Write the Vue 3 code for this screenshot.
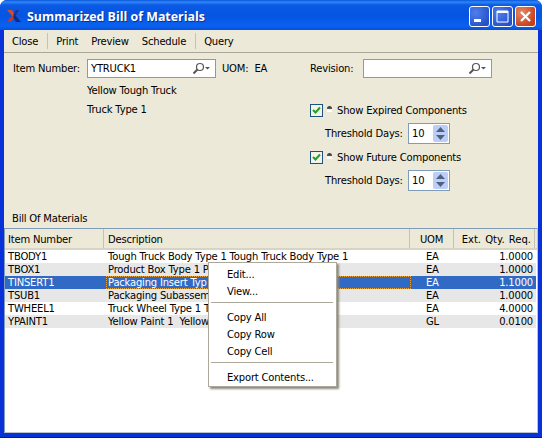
<script setup>
const rows = [
  { item: 'TBODY1', desc: 'Tough Truck Body Type 1 Tough Truck Body Type 1', uom: 'EA', qty: '1.0000' },
  { item: 'TBOX1', desc: 'Product Box Type 1 P', uom: 'EA', qty: '1.0000' },
  { item: 'TINSERT1', desc: 'Packaging Insert Typ', uom: 'EA', qty: '1.1000', selected: true },
  { item: 'TSUB1', desc: 'Packaging Subassembl', uom: 'EA', qty: '1.0000' },
  { item: 'TWHEEL1', desc: 'Truck Wheel Type 1 T', uom: 'EA', qty: '4.0000' },
  { item: 'YPAINT1', desc: 'Yellow Paint 1  Yellow', uom: 'GL', qty: '0.0100' }
]
</script>

<template>
  <div class="window">
    <div class="titlebar">
      <svg class="logo" width="14" height="14" viewBox="0 0 14 14">
        <path d="M0 1h5l3 5-2 2z" fill="#e0491c" />
        <path d="M0 13l5-6 2 2-3 4z" fill="#c8381e" />
        <path d="M12 1H9L6 6l2 2z" fill="#1d3490" />
        <path d="M14 13H9L6 8l2-2z" fill="#16297c" />
      </svg>
      <span class="title">Summarized Bill of Materials</span>
      <div class="winbtns">
        <div class="winbtn blue">
          <svg width="19" height="19" viewBox="0 0 19 19"><rect x="4" y="12" width="7" height="3" fill="#fff" /></svg>
        </div>
        <div class="winbtn blue">
          <svg width="19" height="19" viewBox="0 0 19 19"><path d="M4 4h11v11H4z" fill="none" stroke="#fff" /><rect x="4" y="4" width="11" height="2" fill="#fff" /></svg>
        </div>
        <div class="winbtn red">
          <svg width="19" height="19" viewBox="0 0 19 19"><path d="M5 5l9 9M14 5l-9 9" stroke="#fff" stroke-width="2.2" /></svg>
        </div>
      </div>
    </div>

    <div class="body">
      <div class="toolbar">
        <span class="tool">Close</span>
        <i class="sep"></i>
        <span class="tool">Print</span>
        <span class="tool">Preview</span>
        <span class="tool">Schedule</span>
        <i class="sep"></i>
        <span class="tool">Query</span>
      </div>

      <div class="form">
        <div class="col-left">
          <div class="item-row">
            <label class="item-label">Item Number:</label>
            <div class="cluster">
              <span>YTRUCK1</span>
              <svg class="lens" width="18" height="13" viewBox="0 0 18 13">
                <circle cx="8" cy="5" r="3.5" fill="#fff" stroke="#555" stroke-width="1.2" />
                <path d="M5.5 7.5L1.5 11.5" stroke="#555" stroke-width="2" />
                <path d="M13 5h5l-2.5 2.5z" fill="#555" />
              </svg>
            </div>
            <span class="uom">UOM:</span>
            <span>EA</span>
          </div>
          <div class="desc1">Yellow Tough Truck</div>
          <div class="desc2">Truck Type 1</div>
        </div>

        <div class="col-right">
          <div class="rev-row">
            <label class="rev-label">Revision:</label>
            <div class="cluster">
              <span></span>
              <svg class="lens" width="18" height="13" viewBox="0 0 18 13">
                <circle cx="8" cy="5" r="3.5" fill="#fff" stroke="#555" stroke-width="1.2" />
                <path d="M5.5 7.5L1.5 11.5" stroke="#555" stroke-width="2" />
                <path d="M13 5h5l-2.5 2.5z" fill="#555" />
              </svg>
            </div>
          </div>
          <template v-for="label in ['Show Expired Components', 'Show Future Components']" :key="label">
            <div class="check-row">
              <span class="checkbox">
                <svg width="11" height="11" viewBox="0 0 11 11"><path d="M2 5l2.5 2.5L9 2.5" fill="none" stroke="#21a121" stroke-width="2" /></svg>
              </span>
              <span class="dot"></span>
              <span>{{ label }}</span>
            </div>
            <div class="threshold-row">
              <label class="threshold-label">Threshold Days:</label>
              <div class="spin">
                <span class="spin-value">10</span>
                <div class="spin-btns">
                  <span class="spin-btn"><svg width="9" height="5" viewBox="0 0 9 5"><path d="M4.5 0L9 5H0z" fill="#4d6185" /></svg></span>
                  <span class="spin-btn"><svg width="9" height="5" viewBox="0 0 9 5"><path d="M0 0h9L4.5 5z" fill="#4d6185" /></svg></span>
                </div>
              </div>
            </div>
          </template>
        </div>
      </div>

      <div class="list-label">Bill Of Materials</div>

      <div class="table">
        <div class="thead">
          <div class="th c-item">Item Number</div>
          <div class="th c-desc">Description</div>
          <div class="th c-uom">UOM</div>
          <div class="th c-qty">Ext. Qty. Req.</div>
        </div>
        <div class="tbody">
          <div v-for="(row, i) in rows" :key="row.item" class="tr" :class="{ alt: i % 2 === 1, selected: row.selected }">
            <div class="td d-item">{{ row.item }}</div>
            <div class="td d-desc" :class="{ focus: row.selected }">{{ row.desc }}</div>
            <div class="td d-uom">{{ row.uom }}</div>
            <div class="td d-qty">{{ row.qty }}</div>
          </div>
        </div>

        <div class="menu">
          <div class="menu-item">Edit...</div>
          <div class="menu-item">View...</div>
          <div class="menu-sep"></div>
          <div class="menu-item">Copy All</div>
          <div class="menu-item">Copy Row</div>
          <div class="menu-item">Copy Cell</div>
          <div class="menu-sep"></div>
          <div class="menu-item">Export Contents...</div>
        </div>
      </div>
    </div>
  </div>
</template>

<style scoped>
.window {
  width: 542px;
  height: 438px;
  box-sizing: border-box;
  display: flex;
  flex-direction: column;
  background: #0831d9;
  border-bottom: 1px solid #001a8c;
  font-family: "DejaVu Sans", sans-serif;
  font-size: 10px;
  letter-spacing: -0.2px;
  color: #000;
  overflow: hidden;
  border-radius: 7px 7px 0 0;
}

.titlebar {
  height: 30px;
  flex: none;
  display: flex;
  align-items: center;
  box-sizing: border-box;
  padding: 2px 5px 0 7px;
  background: linear-gradient(#0a56dc 0, #2f86f5 2px, #0a5ae6 5px, #0654e2 16px, #0a62f0 26px, #0850d8 30px);
}

.logo {
  margin-right: 6px;
}

.title {
  color: #fff;
  font-family: "Open Sans", sans-serif;
  font-weight: 700;
  font-size: 12.4px;
  letter-spacing: 0;
  text-shadow: 1px 1px 0 #0a2f90;
  flex: 1;
}

.winbtns {
  display: flex;
  gap: 2px;
  margin-right: 1px;
}

.winbtn {
  width: 21px;
  height: 21px;
  border: 1px solid #fff;
  border-radius: 3px;
  box-sizing: border-box;
  display: flex;
  align-items: center;
  justify-content: center;
}

.winbtn.blue {
  background: radial-gradient(circle at 30% 30%, #4f7fee, #2450c8 80%);
}

.winbtn.red {
  background: radial-gradient(circle at 30% 30%, #e88a68, #c8401c 75%);
}

.body {
  flex: 1;
  margin: 0 4px 4px;
  background: #ece9d8;
  display: flex;
  flex-direction: column;
  min-height: 0;
}

.toolbar {
  height: 22px;
  flex: none;
  display: flex;
  align-items: center;
  padding-left: 8px;
  border-bottom: 1px solid #aca899;
  box-sizing: content-box;
}

.tool {
  margin-right: 13px;
}

.sep {
  width: 1px;
  height: 16px;
  background: #c5c2b2;
  margin-right: 8px;
  margin-left: -4px;
}

.form {
  height: 159px;
  flex: none;
  display: flex;
}

.col-left {
  width: 306px;
  flex: none;
}

.item-row {
  display: flex;
  align-items: center;
  margin-top: 6px;
}

.item-label {
  width: 76px;
  text-align: right;
  margin-right: 7px;
}

.cluster {
  height: 19px;
  background: #fff;
  border: 1px solid #7f9db9;
  display: flex;
  align-items: center;
  justify-content: space-between;
  padding: 0 5px 0 3px;
  box-sizing: border-box;
}

.item-row .cluster {
  width: 129px;
}

.uom {
  margin: 0 6px;
}

.desc1 {
  margin: 6px 0 0 83px;
  line-height: 14px;
}

.desc2 {
  margin: 5px 0 0 83px;
  line-height: 14px;
}

.col-right {
  flex: 1;
}

.rev-row {
  display: flex;
  align-items: center;
  margin-top: 6px;
  margin-bottom: 25px;
}

.rev-label {
  width: 53px;
}

.rev-row .cluster {
  width: 129px;
}

.check-row {
  display: flex;
  align-items: center;
  height: 14px;
}

.checkbox {
  width: 13px;
  height: 13px;
  box-sizing: border-box;
  border: 1px solid #1c5180;
  background: #f3f3ec;
  display: flex;
  align-items: center;
  justify-content: center;
  margin-right: 4px;
}

.dot {
  width: 5px;
  height: 6px;
  border-radius: 5px 5px 0 0;
  background: linear-gradient(#444 40%, #fff 60%);
  margin-right: 5px;
  margin-bottom: 3px;
}

.threshold-row {
  display: flex;
  align-items: center;
  margin-top: 6px;
  margin-bottom: 6px;
  padding-left: 15px;
}

.threshold-label {
  width: 83px;
}

.spin {
  width: 42px;
  height: 21px;
  background: #fff;
  border: 1px solid #7f9db9;
  box-sizing: border-box;
  display: flex;
  align-items: center;
  justify-content: space-between;
}

.spin-value {
  padding-left: 3px;
}

.spin-btns {
  width: 15px;
  height: 17px;
  margin-right: 1px;
  display: flex;
  flex-direction: column;
  background: #bccef5;
  border-radius: 2px;
}

.spin-btn {
  flex: 1;
  display: flex;
  align-items: center;
  justify-content: center;
}

.list-label {
  height: 16px;
  line-height: 14px;
  padding-left: 8px;
  flex: none;
}

.table {
  flex: 1;
  position: relative;
  background: #fff;
  border: 1px solid #7f9db9;
  border-right-color: #b9c4cf;
  border-bottom-color: #b9c4cf;
  min-height: 0;
}

.thead {
  display: flex;
  height: 21px;
  box-sizing: border-box;
  background: #ece9d8;
  border-bottom: 2px solid #d8d4c4;
}

.th {
  border-right: 1px solid #c5c2b2;
  padding-left: 3px;
  line-height: 21px;
  box-sizing: border-box;
}

.th.c-desc {
  padding-left: 4px;
}

.th.c-uom {
  text-align: center;
  padding-left: 0;
}

.th.c-qty {
  text-align: right;
  padding: 0 3px 0 0;
  letter-spacing: 0;
  word-spacing: 1px;
  white-space: nowrap;
}

.c-item {
  width: 99px;
}

.c-desc {
  width: 306px;
}

.c-uom {
  width: 44px;
}

.c-qty {
  width: 81px;
}

.tr {
  display: flex;
  height: 13px;
  line-height: 13px;
  width: 531px;
}

.tr.alt {
  background: #e7e7e7;
}

.tr.selected {
  background: #316ac5;
  color: #fff;
}

.td {
  box-sizing: border-box;
  white-space: pre;
  overflow: hidden;
}

.d-item {
  width: 101px;
  padding-left: 3px;
}

.d-desc {
  width: 305px;
  padding-left: 2px;
}

.d-uom {
  width: 44px;
  padding-left: 15px;
}

.d-qty {
  width: 81px;
  text-align: right;
  padding-right: 3px;
}

.focus {
  outline: 1px dotted #e8a33d;
  outline-offset: -1px;
}

.menu {
  position: absolute;
  left: 203px;
  top: 33px;
  width: 129px;
  box-sizing: border-box;
  background: #fff;
  border: 1px solid #aca899;
  box-shadow: 2px 2px 2px #8a8a82;
  padding: 3px 0 0;
  color: #000;
}

.menu-item {
  height: 17px;
  line-height: 17px;
  padding-left: 18px;
}

.menu-sep {
  height: 1px;
  margin: 2px 3px 6px 2px;
  background: #aca899;
}
</style>

<style>
html, body {
  margin: 0;
  background: #fff;
}
</style>
